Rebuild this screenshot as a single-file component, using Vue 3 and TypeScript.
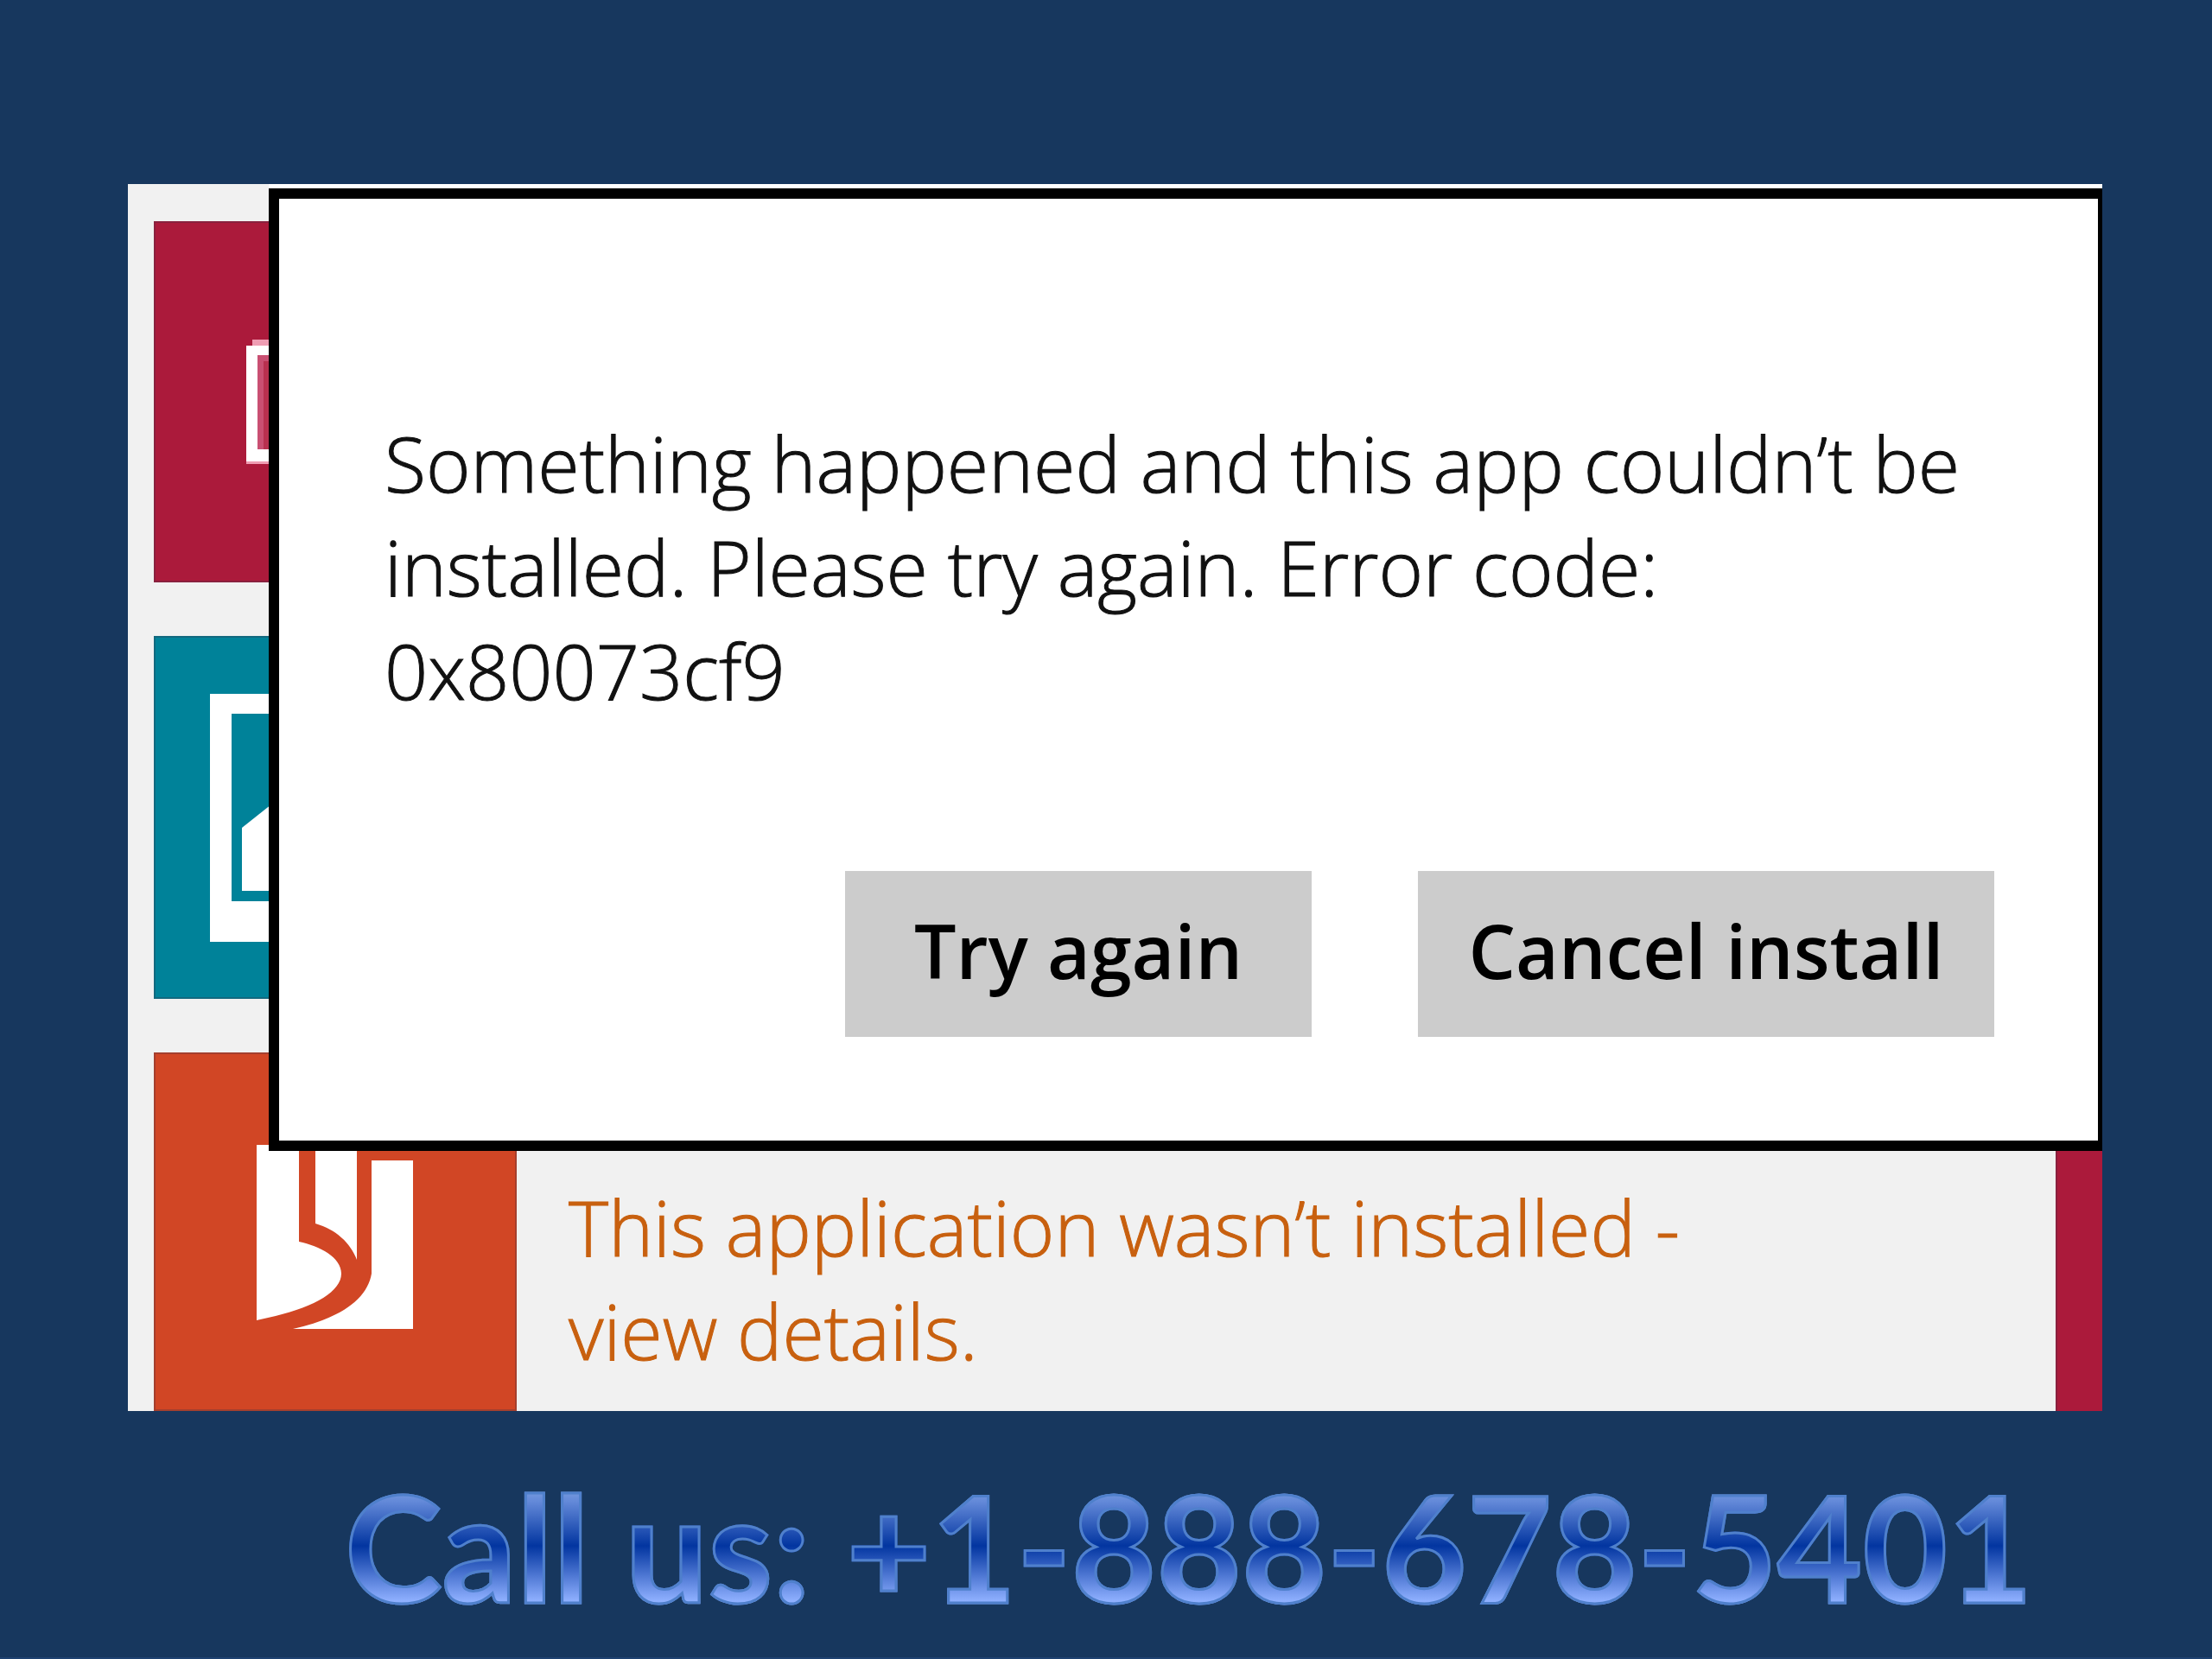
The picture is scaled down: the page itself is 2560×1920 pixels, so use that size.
<script setup lang="ts">
interface AppRow {
  id: string
  icon: 'news' | 'photos' | 'slides'
  status: string
}

const rows: AppRow[] = [
  { id: 'crimson', icon: 'news', status: '' },
  { id: 'teal', icon: 'photos', status: '' },
  { id: 'orange', icon: 'slides', status: 'This application wasn’t installed - view details.' },
]

const message =
  'Something happened and this app couldn’t be installed. Please try again. Error code: 0x80073cf9'
</script>

<template>
  <main class="slide">
    <section class="screen">
      <ul class="apps">
        <li v-for="row in rows" :key="row.id" class="row">
          <div class="tile" :class="row.id">
            <svg viewBox="0 0 420 420" aria-hidden="true">
              <template v-if="row.icon === 'news'">
                <path d="M107 144h7v-7h193v144H107z" fill="#ef9db3" />
                <path d="M107 144h200v134H107z" fill="#fff" />
                <path d="M120 155h174v109H120z" fill="#c94f72" />
                <path d="M127 162h160v102H127z" fill="#b8304f" />
              </template>
              <template v-else-if="row.icon === 'photos'">
                <path d="M65 67h290v287H65z" fill="#fff" />
                <path d="M90 90h240v217H90z" fill="#008299" />
                <path d="M102 222l34-27 60-44 122 100v44H102z" fill="#fff" />
              </template>
              <template v-else>
                <path d="M119 107h49v112c24 5 49 18 49 37 0 20-30 38-76 49l-22 5z" fill="#fff" />
                <path d="M187 90h48v150c-8-20-24-35-48-42z" fill="#fff" />
                <path d="M252 125h48v195H161c54-12 86-34 91-64z" fill="#fff" />
              </template>
            </svg>
          </div>
          <div class="info">
            <a v-if="row.status" href="#details" class="status">{{ row.status }}</a>
          </div>
          <div v-if="row.status" class="next"></div>
        </li>
      </ul>

      <div class="dialog" role="alertdialog" aria-labelledby="msg">
        <p id="msg" class="message">{{ message }}</p>
        <div class="actions">
          <button type="button" class="retry">Try again</button>
          <button type="button" class="cancel">Cancel install</button>
        </div>
      </div>
    </section>

    <h1 class="call">Call us: +1-888-678-5401</h1>
  </main>
</template>

<style>
body {
  margin: 0;
  background: #17375e;
}
</style>

<style scoped>
.slide {
  box-sizing: border-box;
  min-height: 100vh;
  padding: 213px 127px 0 148px;
  border-bottom: 2px solid #1f4270;
  background: #17375e;
  font-family: "Open Sans", "Noto Sans", sans-serif;
  overflow: hidden;
}

.screen {
  position: relative;
  padding: 43px 0 0 30px;
  background: #f1f1f1;
}

.apps {
  display: flex;
  flex-direction: column;
  gap: 62px;
  margin: 0;
  padding: 0;
  list-style: none;
}

.row {
  display: flex;
}

.tile {
  flex: none;
  width: 420px;
  height: 420px;
  box-shadow: inset 0 0 0 2px rgba(60, 50, 70, 0.3);
}

.tile svg {
  display: block;
  width: 420px;
  height: 420px;
}

.crimson {
  height: 418px;
}

.orange {
  height: 415px;
  overflow: hidden;
}

.crimson,
.next {
  background: #ab1a3b;
}

.teal {
  background: #008299;
}

.orange {
  background: #d14625;
}

.info {
  flex: 1;
  padding: 142px 300px 0 60px;
}

.status,
.message {
  font-size: 88px;
  font-weight: 300;
  line-height: 120px;
  -webkit-text-stroke: 1px currentColor;
}

.status {
  display: block;
  color: #c8600f;
  text-decoration: none;
}

.next {
  width: 54px;
  box-shadow: inset 2px 0 0 rgba(60, 50, 70, 0.3);
}

.dialog {
  position: absolute;
  top: 5px;
  right: 0;
  left: 163px;
  box-sizing: border-box;
  padding: 246px 120px 120px 122px;
  border: 12px solid #000;
  border-right-width: 5px;
  background: #fff;
  box-shadow: 0 -5px 0 #fff;
}

.message {
  margin: 0;
  color: #111;
}

.actions {
  display: flex;
  justify-content: flex-end;
  gap: 123px;
  margin-top: 172px;
}

.actions button {
  height: 192px;
  padding: 0 0 8px;
  border: 0;
  background: #ccc;
  color: #000;
  font-family: inherit;
  font-size: 86px;
  font-weight: 600;
  line-height: 120px;
}

.retry {
  width: 540px;
}

.cancel {
  width: 667px;
}

.call {
  width: fit-content;
  margin: 46px 0 0 251px;
  background: linear-gradient(#7a9de0 20%, #6288d8 27%, #0235a0 50%, #8fb0ff 79%);
  background-clip: text;
  -webkit-background-clip: text;
  -webkit-text-stroke: 3px #4f80cc;
  color: transparent;
  font-family: Lato, sans-serif;
  font-size: 170px;
  font-weight: 700;
  line-height: 220px;
  white-space: nowrap;
}
</style>
